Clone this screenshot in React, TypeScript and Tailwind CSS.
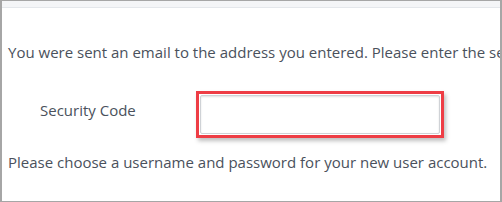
export default function App() {
  return (
    <div className="h-[202px] w-[502px] overflow-hidden border-x-2 border-y border-[#a6a6a6] bg-white font-['Open_Sans',sans-serif] text-[15px] leading-[20px] text-[#4a515c]">
      <div className="h-[7px] border-b border-[#e4e7eb] bg-[#f4f5f7]" />
      <div className="flex flex-col whitespace-nowrap pl-[6px] pt-[34px]">
        <p>You were sent an email to the address you entered. Please enter the security code below.</p>
        <div className="mt-[29px] flex items-start">
          <label className="w-[188px] pl-[32px] pt-[9px]">Security Code</label>
          <div className="h-[47px] w-[248px] border-[3px] border-[#ee3d45] bg-white p-px shadow-[2px_3px_4px_rgba(0,0,0,0.25)]">
            <input className="h-full w-full rounded-[2px] border border-[#cfd2d6] bg-white shadow-[inset_0_1px_2px_rgba(0,0,0,0.12)] outline-none" />
          </div>
        </div>
        <p className="mt-[14px]">Please choose a username and password for your new user account.</p>
      </div>
    </div>
  );
}
